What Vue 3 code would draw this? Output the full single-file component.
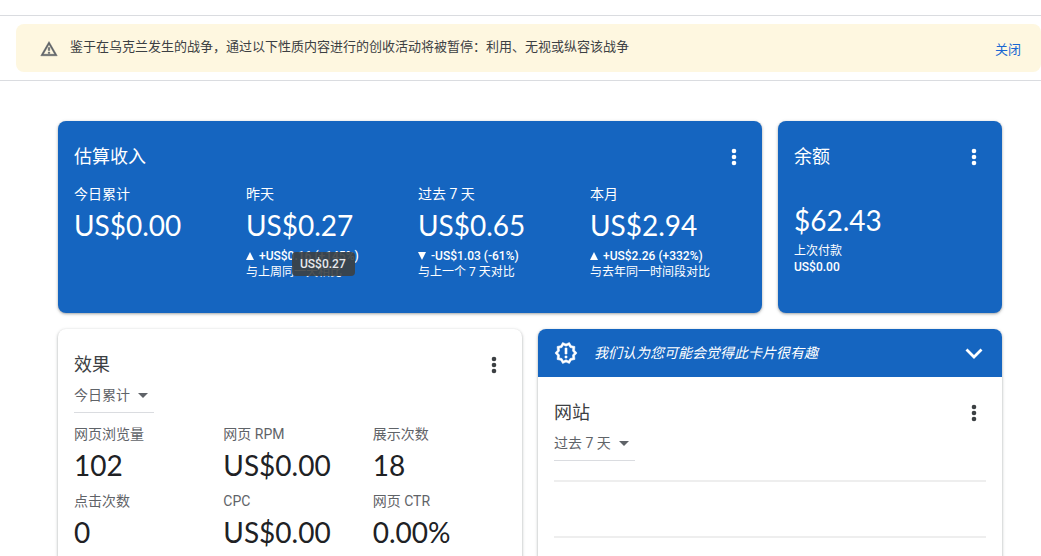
<script setup>
import { ref } from 'vue'

const performanceRange = ref('today')
const sitesRange = ref('week')

const earnings = [
  { label: '今日累计', value: 'US$0.00' },
  { label: '昨天', value: 'US$0.27', up: true, change: '+US$0.16 (+145%)', note: '与上周同一天相比', tooltip: 'US$0.27' },
  { label: '过去 7 天', value: 'US$0.65', up: false, change: '-US$1.03 (-61%)', note: '与上一个 7 天对比' },
  { label: '本月', value: 'US$2.94', up: true, change: '+US$2.26 (+332%)', note: '与去年同一时间段对比' },
]

const performance = [
  { label: '网页浏览量', value: '102' },
  { label: '网页 RPM', value: 'US$0.00' },
  { label: '展示次数', value: '18' },
  { label: '点击次数', value: '0' },
  { label: 'CPC', value: 'US$0.00' },
  { label: '网页 CTR', value: '0.00%' },
]
</script>

<template>
  <div class="page">
    <section class="notice-bar">
      <div class="notice">
        <svg class="notice-icon" viewBox="0 0 24 24" aria-hidden="true">
          <path d="M12 5.99L19.53 19H4.47L12 5.99M12 2L1 21h22L12 2zm1 14h-2v2h2v-2zm0-6h-2v4h2v-4z" />
        </svg>
        <p class="notice-text">鉴于在乌克兰发生的战争，通过以下性质内容进行的创收活动将被暂停：利用、无视或纵容该战争</p>
        <button class="notice-close" type="button">关闭</button>
      </div>
    </section>

    <main class="cards">
      <section class="card card-blue wide">
        <header class="card-head">
          <h2>估算收入</h2>
          <button class="menu" type="button" aria-label="更多选项">
            <svg viewBox="0 0 24 24"><circle cx="12" cy="6" r="2.3" /><circle cx="12" cy="12" r="2.3" /><circle cx="12" cy="18" r="2.3" /></svg>
          </button>
        </header>
        <div class="earnings">
          <div v-for="item in earnings" :key="item.label" class="metric">
            <div class="label">{{ item.label }}</div>
            <div class="value">{{ item.value }}</div>
            <template v-if="item.change">
              <div class="change">
                <svg class="trend" viewBox="0 0 8 8" aria-hidden="true">
                  <path :d="item.up ? 'M4 0L8 8H0z' : 'M0 0H8L4 8z'" />
                </svg>{{ item.change }}
              </div>
              <div class="note">{{ item.note }}</div>
            </template>
            <div v-if="item.tooltip" class="tooltip" role="tooltip">{{ item.tooltip }}</div>
          </div>
        </div>
      </section>

      <section class="card card-blue">
        <header class="card-head">
          <h2>余额</h2>
          <button class="menu" type="button" aria-label="更多选项">
            <svg viewBox="0 0 24 24"><circle cx="12" cy="6" r="2.3" /><circle cx="12" cy="12" r="2.3" /><circle cx="12" cy="18" r="2.3" /></svg>
          </button>
        </header>
        <div class="balance">
          <div class="value">$62.43</div>
          <div class="note">上次付款</div>
          <div class="change">US$0.00</div>
        </div>
      </section>

      <section class="card half">
        <header class="card-head">
          <h2>效果</h2>
          <button class="menu" type="button" aria-label="更多选项">
            <svg viewBox="0 0 24 24"><circle cx="12" cy="6" r="2.3" /><circle cx="12" cy="12" r="2.3" /><circle cx="12" cy="18" r="2.3" /></svg>
          </button>
        </header>
        <div class="range">
          <select v-model="performanceRange" aria-label="效果的日期范围">
            <option value="today">今日累计</option>
          </select>
          <svg class="arrow" viewBox="0 0 10 5" aria-hidden="true"><path d="M0 0h10L5 5z" /></svg>
        </div>
        <div class="performance">
          <div v-for="item in performance" :key="item.label">
            <div class="label">{{ item.label }}</div>
            <div class="value">{{ item.value }}</div>
          </div>
        </div>
      </section>

      <section class="card half suggested">
        <div class="suggestion">
          <svg class="badge" viewBox="0 0 24 24" aria-hidden="true">
            <path d="M23 12l-2.44-2.78.34-3.68-3.61-.82-1.89-3.18L12 3 8.6 1.54 6.71 4.72l-3.61.81.34 3.68L1 12l2.44 2.78-.34 3.69 3.61.82 1.89 3.18L12 21l3.4 1.46 1.89-3.18 3.61-.82-.34-3.68L23 12zm-4.51 2.11l.26 2.79-2.74.62-1.43 2.41L12 18.82l-2.58 1.11-1.43-2.41-2.74-.62.26-2.8L3.66 12l1.85-2.12-.26-2.78 2.74-.61 1.43-2.41L12 5.18l2.58-1.11 1.43 2.41 2.74.62-.26 2.79L20.34 12l-1.85 2.11zM11 15h2v2h-2zm0-8h2v6h-2z" />
          </svg>
          <em>我们认为您可能会觉得此卡片很有趣</em>
          <button class="menu" type="button" aria-label="展开">
            <svg viewBox="0 0 24 24"><path class="chevron" d="M4.5 8.5L12 16l7.5-7.5" /></svg>
          </button>
        </div>
        <div class="card-body">
          <header class="card-head">
            <h2>网站</h2>
            <button class="menu" type="button" aria-label="更多选项">
              <svg viewBox="0 0 24 24"><circle cx="12" cy="6" r="2.3" /><circle cx="12" cy="12" r="2.3" /><circle cx="12" cy="18" r="2.3" /></svg>
            </button>
          </header>
          <div class="range">
            <select v-model="sitesRange" aria-label="网站的日期范围">
              <option value="week">过去 7 天</option>
            </select>
            <svg class="arrow" viewBox="0 0 10 5" aria-hidden="true"><path d="M0 0h10L5 5z" /></svg>
          </div>
          <div class="chart">
            <div class="gridline"></div>
            <div class="gridline"></div>
          </div>
        </div>
      </section>
    </main>
  </div>
</template>

<style>
body {
  margin: 0;
  background: #fff;
}
</style>

<style scoped>
.page {
  height: 100vh;
  overflow: hidden;
  padding-top: 15px;
  box-sizing: border-box;
  font-family: Roboto, "Noto Sans CJK SC", sans-serif;
  font-size: 14px;
  color: #3c4043;
}

button,
select {
  margin: 0;
  padding: 0;
  border: 0;
  background: none;
  font: inherit;
  color: inherit;
}

.notice-bar {
  padding: 8px 0 8px 16px;
  border-top: 1px solid #dadce0;
  border-bottom: 1px solid #dadce0;
}

.notice {
  display: flex;
  height: 48px;
  padding: 0 20px 0 24px;
  border-radius: 8px;
  background: #fef7e0;
  font-size: 13px;
  line-height: 20px;
}

.notice-icon {
  width: 18px;
  height: 18px;
  margin: 16px 12px 0 0;
  fill: #5f6368;
  stroke: #5f6368;
  stroke-width: 0.6;
}

.notice-text {
  flex: 1;
  margin: 13px 0 0;
}

.notice-close {
  align-self: flex-start;
  margin-top: 16px;
  color: #1967d2;
}

.cards {
  display: grid;
  grid-template-columns: repeat(4, 1fr);
  gap: 16px;
  padding: 40px 39px 40px 58px;
}

.card {
  min-height: 192px;
  box-sizing: border-box;
  padding: 24px 0 24px 16px;
  border-radius: 8px;
  background: #fff;
  box-shadow: 0 1px 2px rgba(60, 64, 67, 0.3), 0 1px 3px 1px rgba(60, 64, 67, 0.15);
}

.card-blue {
  background: #1565c0;
  color: #fff;
}

.wide {
  grid-column: span 3;
}

.half {
  grid-column: span 2;
  min-height: 320px;
}

.card-head {
  display: flex;
  align-items: center;
  justify-content: space-between;
  height: 24px;
  padding-right: 16px;
}

h2 {
  margin: 0;
  font-size: 18px;
  font-weight: 400;
  line-height: 24px;
}

.menu,
.menu svg {
  display: block;
  width: 24px;
  height: 24px;
  fill: currentColor;
}

.menu .chevron {
  fill: none;
  stroke: currentColor;
  stroke-width: 2.8;
}

.earnings {
  display: grid;
  grid-template-columns: repeat(4, 1fr);
  padding-top: 15px;
}

.metric {
  position: relative;
}

.label {
  line-height: 20px;
}

.value {
  padding-bottom: 2px;
  font-family: Lato, "Noto Sans CJK SC", sans-serif;
  font-size: 28px;
  line-height: 42px;
}

.change,
.note {
  font-size: 12px;
  font-weight: 500;
  line-height: 16px;
  white-space: nowrap;
}

.note {
  font-weight: 400;
}

.trend {
  width: 8px;
  height: 8px;
  margin-right: 5px;
  fill: currentColor;
}

.tooltip {
  position: absolute;
  top: 68px;
  left: 46px;
  padding: 0 9px 0 8px;
  border-radius: 4px;
  background: rgba(60, 64, 67, 0.9);
  color: #e8eaed;
  font-size: 12px;
  font-weight: 500;
  line-height: 24px;
}

.balance {
  padding-top: 30px;
}

.range {
  position: relative;
  display: inline-block;
  border-bottom: 1px solid #dadce0;
  color: #5f6368;
}

.range select {
  display: block;
  height: 35px;
  padding-right: 24px;
  appearance: none;
}

.arrow {
  position: absolute;
  top: 16px;
  right: 6px;
  width: 10px;
  height: 5px;
  fill: #5f6368;
  pointer-events: none;
}

.performance {
  display: grid;
  grid-template-columns: repeat(3, 1fr);
  row-gap: 3px;
  padding-top: 11px;
}

.performance .label {
  color: #5f6368;
}

.performance .value {
  color: #202124;
}

.suggested {
  padding: 0;
}

.suggestion {
  display: flex;
  align-items: center;
  height: 48px;
  padding: 0 16px;
  border-radius: 8px 8px 0 0;
  background: #1565c0;
  color: #fff;
}

.suggestion em {
  flex: 1;
  padding-bottom: 2px;
}

.badge {
  width: 24px;
  height: 24px;
  margin-right: 16px;
  fill: currentColor;
  stroke: currentColor;
  stroke-width: 0.6;
}

.card-body {
  padding: 24px 0 24px 16px;
}

.chart {
  padding: 19px 16px 0 0;
}

.gridline {
  height: 54px;
  border-top: 2px solid #eee;
}
</style>
